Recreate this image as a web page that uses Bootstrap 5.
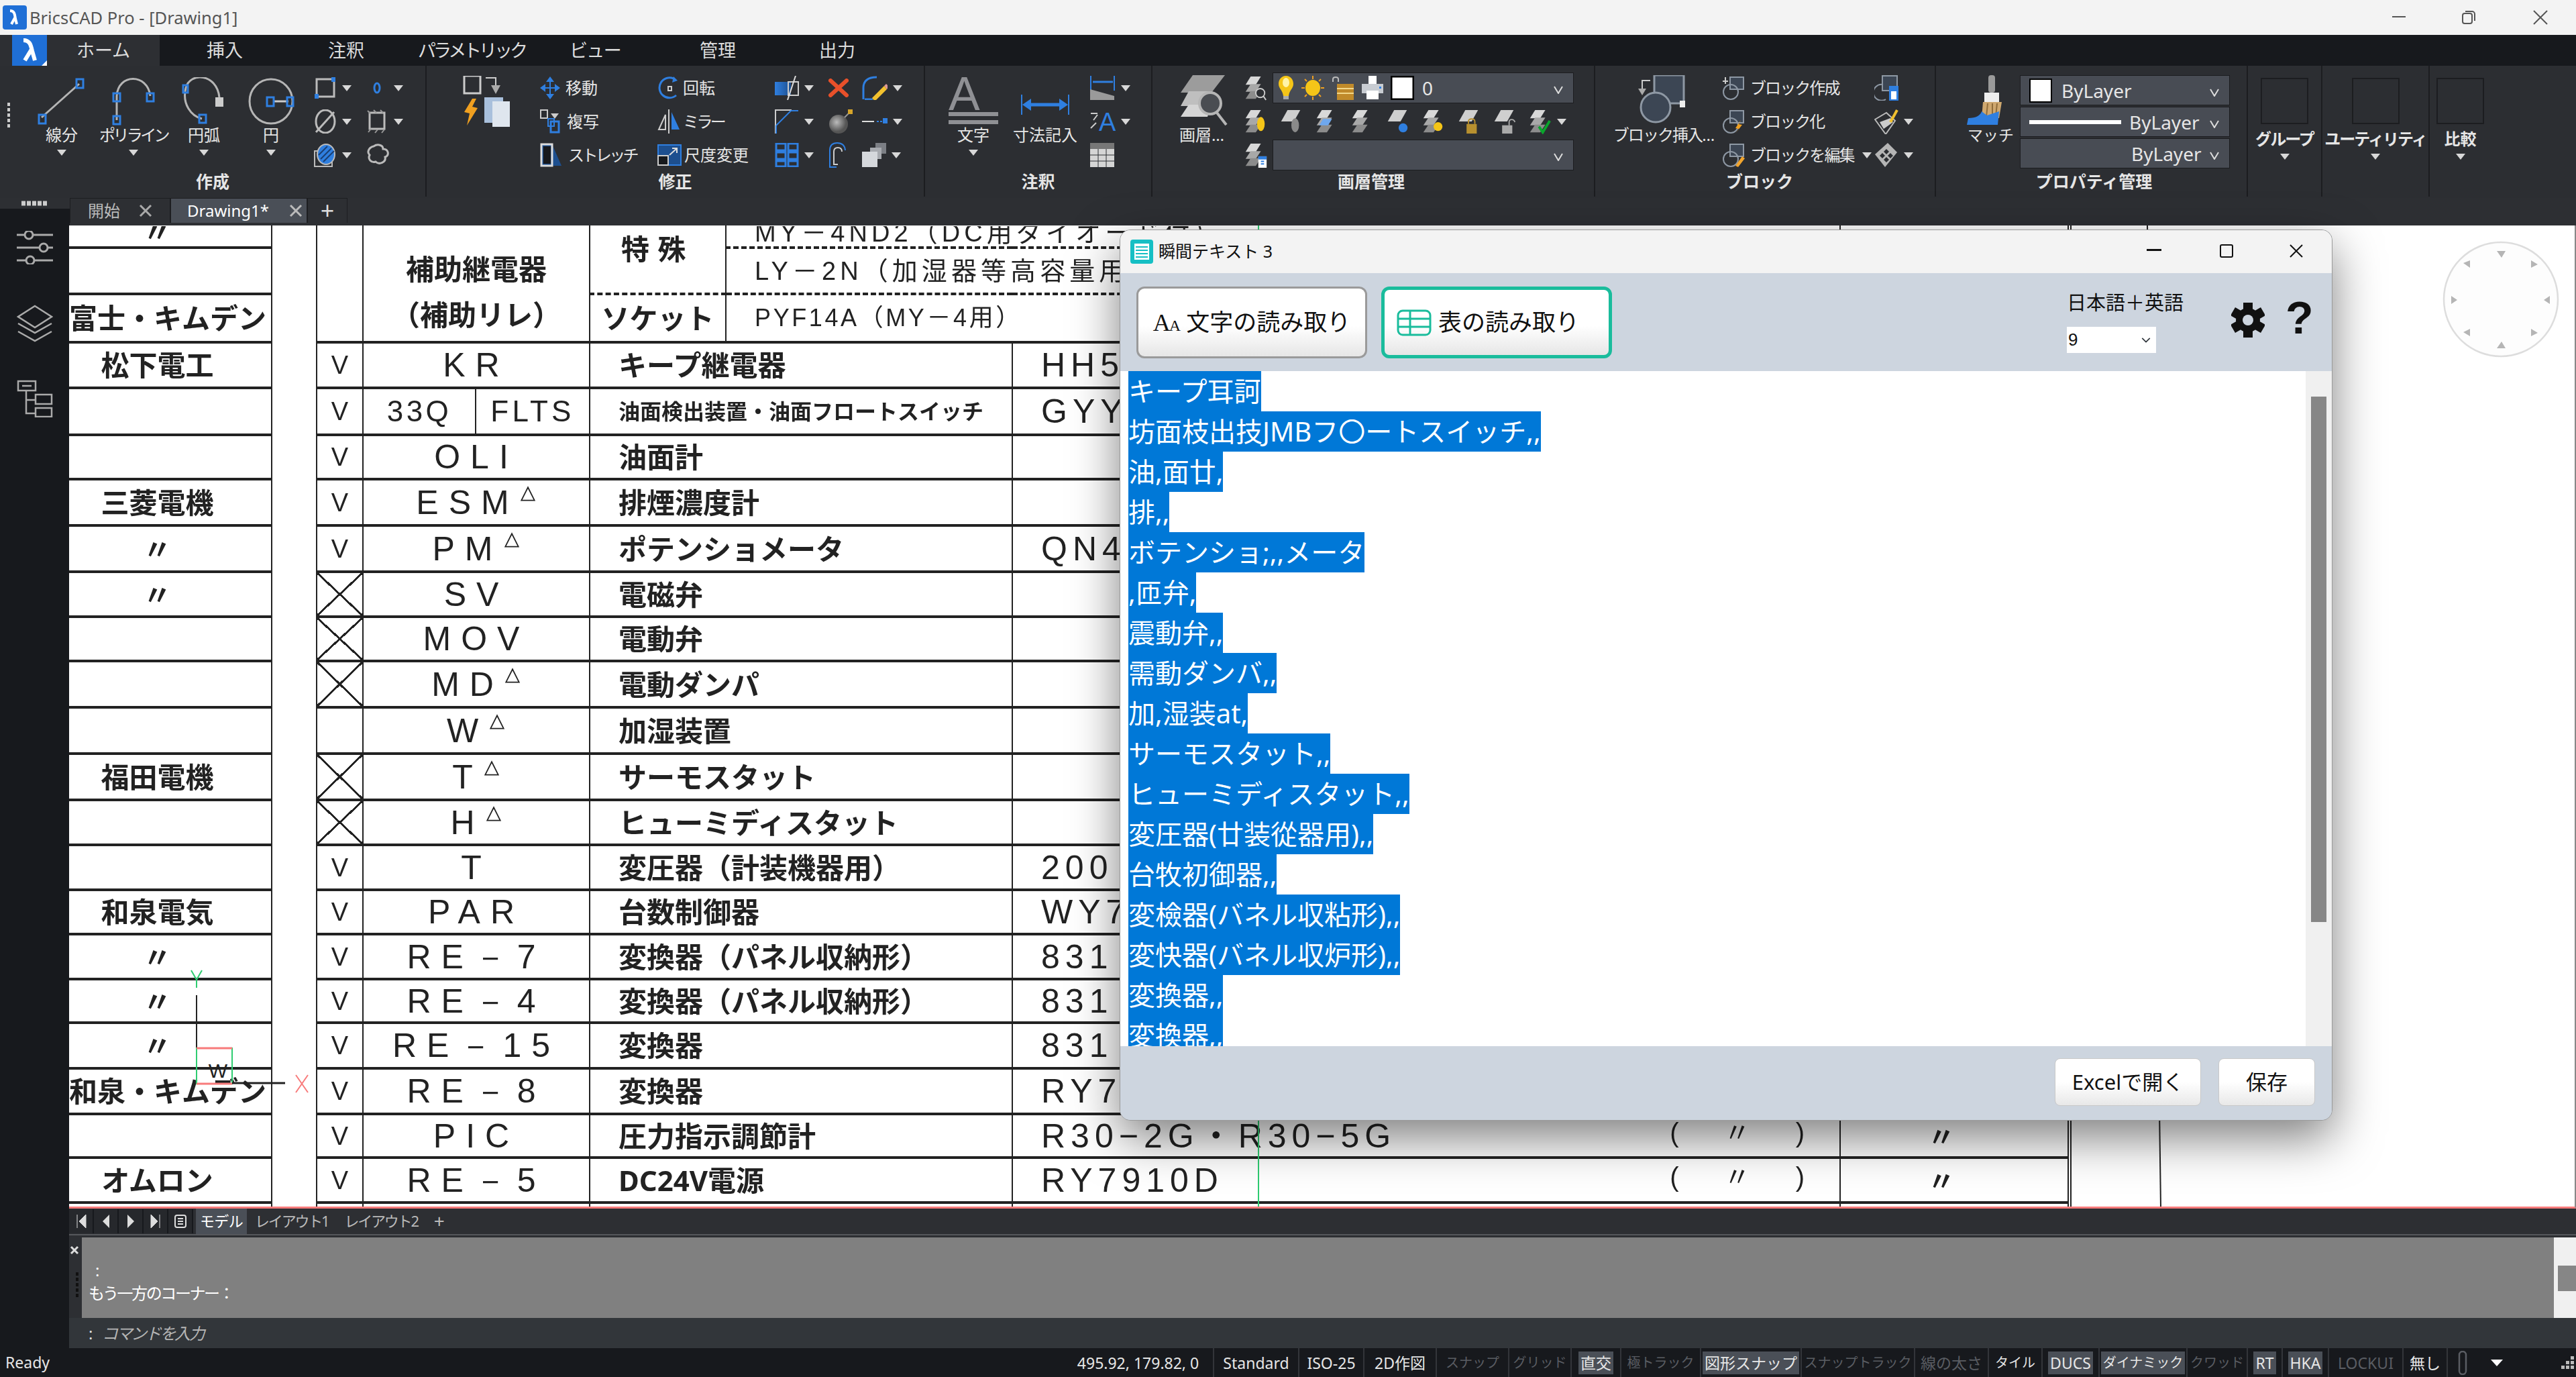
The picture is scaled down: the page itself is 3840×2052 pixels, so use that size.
<!DOCTYPE html>
<html lang="ja">

<head>
  <meta charset="UTF-8">
  <meta name="viewport" content="width=device-width, initial-scale=1.0">
  <title>BricsCAD Pro - [Drawing1]</title>
  <link href="https://cdn.jsdelivr.net/npm/bootstrap@5.3.0/dist/css/bootstrap.min.css" rel="stylesheet">
  <style>
    body {
      width: 3840px;
      height: 2052px;
      overflow: hidden;
      background: #17191d;
      color: #e6e6e6;
      font-family: "Noto Sans", "Noto Sans CJK JP", sans-serif;
      font-size: 24px;
    }

    svg { display: block; flex: none; }
    .kn { letter-spacing: -.15em; }
    .kn2 { letter-spacing: -.08em; }

    /* title + menu */
    .titlebar { height: 52px; background: #f3f3f3; color: #555; font-size: 25.5px; }
    .titlebar .ctl { position: absolute; top: 15px; }
    .menubar { height: 46px; background: #17191d; font-size: 27px; color: #ddd; }
    .menubar .tab { display: flex; align-items: center; justify-content: center; height: 46px; }
    .menubar .tab:nth-child(1) { width: 238px; background: #2d2f33; padding-left: 70px; position: relative; }
    .menubar .tab:nth-child(2) { width: 194px; }
    .menubar .tab:nth-child(3) { width: 168px; }
    .menubar .tab:nth-child(4) { width: 206px; }
    .menubar .tab:nth-child(5) { width: 162px; }
    .menubar .tab:nth-child(6) { width: 204px; }
    .menubar .tab:nth-child(7) { width: 152px; }
    .menubar .logo { position: absolute; left: 18px; top: 0; }

    /* ribbon */
    .ribbon { height: 197px; background: #2c2e32; }
    .panel { height: 195px; border-right: 2px solid #1c1d20; flex: none; }
    .panel-body { height: 155px; display: flex; }
    .panel-title { height: 34px; line-height: 34px; text-align: center; font-weight: 700; font-size: 25px; }
    .p1 { width: 636px; padding-left: 38px; }
    .p2 { width: 743px; padding-left: 54px; }
    .p3 { width: 339px; padding-left: 22px; }
    .p4 { width: 660px; padding-left: 40px; }
    .p5 { width: 508px; padding-left: 14px; }
    .p6 { width: 465px; padding-left: 38px; }
    .p7 { width: 111px; }
    .p8 { width: 160px; }
    .p9 { flex: 1; border-right: 0; width: 218px; padding-left: 10px; }
    .lg { display: flex; flex-direction: column; align-items: center; flex: none; white-space: nowrap; }
    .lg .ic { height: 75px; margin-top: 14px; display: flex; align-items: flex-end; }
    .lg .lb { line-height: 28px; height: 28px; }
    .lg .cr { margin-top: 8px; }
    .cr { display: block; flex: none; width: 0; height: 0; border-left: 7px solid transparent; border-right: 7px solid transparent; border-top: 9px solid #d8d8d8; }
    .stack { display: grid; grid-auto-rows: 50px; margin-top: 8px; align-items: center; flex: none; }
    .it { display: flex; align-items: center; white-space: nowrap; }
    .combo { background: #484c54; border: 1px solid #1c1d20; display: flex; align-items: center; position: relative; font-size: 28px; }
    .combo .chev { position: absolute; right: 14px; top: 50%; margin-top: -3px; }
    .gp { width: 71px; height: 69px; border: 2px solid #1c1d20; margin-top: 18px; }

    /* doc tabs */
    .docbar { height: 41px; background: #2d2f33; position: relative; }
    .docbar .lead { width: 104px; height: 41px; background: linear-gradient(#2d2f33 0 16px, #17191d 16px); padding: 4px 0 0 32px; }
    .doc { height: 37px; display: flex; align-items: center; color: #bbb; border: 1px solid #1d1e21; border-bottom: 0; }
    .doc.on { background: #4a4f57; color: #fff; }

    /* rail, canvas */
    .work { height: 1673px; }
    .rail { width: 103px; flex: none; background: #17191d; position: relative; }
    .canvas { height: 1466px; background: #fff; position: relative; overflow: hidden; border-bottom: 3px solid #f87b7b; border-right: 2px solid #888; }
    .scan { table-layout: fixed; width: 2982px; border-collapse: collapse; color: #222; filter: blur(.7px); }
    .scan td { border-left: 2px solid #222; border-bottom: 4px solid #222; padding: 0; white-space: nowrap; overflow: hidden; vertical-align: middle; line-height: 1; }
    .scan td.mk { border-left: 0; text-align: center; font-size: 42px; font-weight: 700; padding-right: 38px; }
    .scan td.gap { border-bottom: 0; }
    .scan td.v { text-align: center; font-size: 38px; font-family: "Liberation Sans", sans-serif; }
    .scan td.x { background:
        linear-gradient(to top right, transparent calc(50% - 1.5px), #222 calc(50% - 1.5px), #222 calc(50% + 1.5px), transparent calc(50% + 1.5px)),
        linear-gradient(to bottom right, transparent calc(50% - 1.5px), #222 calc(50% - 1.5px), #222 calc(50% + 1.5px), transparent calc(50% + 1.5px)); }
    .scan td.sy { text-align: center; font-family: "Liberation Sans", sans-serif; font-size: 50px; letter-spacing: .3em; }
    .scan td.sy sup { font-size: 26px; letter-spacing: 0; top: -.8em; font-weight: 700; }
    .scan td.nm { font-size: 42px; font-weight: 700; padding-left: 42px; }
    .scan td.nm.sm { font-size: 32px; }
    .scan td.md { font-family: "Liberation Sans", "Noto Sans CJK JP", sans-serif; font-size: 50px; letter-spacing: .16em; padding-left: 42px; }
    .scan td.rm { font-size: 40px; padding-left: 130px; font-weight: 700; border-right: 6px double #222; }
    .scan td.dash { border-bottom: 4px dashed #222; }
    .scan .hd { text-align: center; font-weight: 700; font-size: 42px; line-height: 68px; }
    .scan .r { float: right; margin-right: 24px; letter-spacing: .7em; font-size: 40px; }
    .scan .clip { height: 29px; overflow: hidden; display: flex; align-items: flex-end; justify-content: inherit; }
    .scan tr.tail td { border-bottom: 0; font-size: 0; }

    /* layout tabs, command line */
    .laybar { height: 38px; background: #2d2f33; color: #bbb; font-size: 22px; }
    .laybar .nv { width: 37px; height: 36px; display: flex; align-items: center; justify-content: center; background: #26282c; border-right: 2px solid #17191d; }
    .laybar .lt { height: 38px; line-height: 36px; padding: 0 6px; white-space: nowrap; letter-spacing: -.03em; }
    .laybar .lt.on { background: #4a4f57; color: #fff; }
    .cmdsep { height: 5px; background: #2d2f33; border-top: 2px solid #55575b; }
    .cmdout { height: 120px; background: #808080; color: #fff; font-size: 24px; line-height: 34px; padding: 32px 0 0 10px; letter-spacing: -.1em; }
    .cmdgrip { width: 19px; background: #2d2f33; flex: none; }
    .cmdbar { width: 33px; background: #f0f0f0; flex: none; padding-top: 42px; }
    .cmdbar div { height: 38px; margin-left: 6px; background: #868686; }
    .cmdin { height: 45px; background: #32363a; color: #b5b5b5; font-size: 24px; font-style: italic; padding-left: 29px; letter-spacing: -.1em; }

    /* status */
    .status { height: 43px; background: #17191d; font-size: 23px; color: #e6e6e6; }
    .status .sb { height: 43px; display: flex; align-items: center; justify-content: center; border-right: 2px solid #33353a; flex: none; white-space: nowrap; padding: 4px 4px; }
    .status .sb span { display: block; line-height: 34px; padding: 0 3px; }
    .status .on span { background: #4a4f57; }
    .status .dim { color: #5a5d63; }
    .status .k { font-size: 20px; }

    /* dialog */
    .dlg { left: 1669px; top: 342px; width: 1808px; height: 1328px; border-radius: 16px; overflow: hidden; border: 1px solid #9a9a9a; box-shadow: 0 26px 70px rgba(0, 0, 0, .5); z-index: 10; color: #111; background: #cdd5df; }
    .dlg-title { height: 64px; background: #f3f3f3; font-size: 25px; color: #111; }
    .dlg-tools { height: 146px; background: #cdd5df; padding: 20px 0 0 24px; }
    .read-btn { width: 344px; height: 107px; padding: 0; border: 3px solid #9a9a9a; border-radius: 12px; background: linear-gradient(#fff 55%, #e6e6e6); color: #111; font-size: 35px; display: flex; align-items: center; justify-content: center; gap: 10px; }
    .read-btn.on { border: 5px solid #1abc9c; margin-left: 21px; justify-content: flex-start; padding-left: 18px; }
    .read-btn .aa { font-family: "Liberation Serif", serif; font-size: 36px; letter-spacing: -2px; }
    .read-btn .aa small { font-size: 24px; }
    .lang { position: absolute; left: 1411px; top: 27px; font-size: 29px; white-space: nowrap; line-height: 34px; }
    .lang .form-select { width: 133px; height: 39px; margin-top: 19px; padding: 0 0 0 2px; border: 0; border-radius: 0; font-size: 26px; line-height: 39px; background-position: right 8px center; background-size: 14px; color: #111; font-family: "Liberation Sans", sans-serif; }
    .dlg-text { height: 1006px; background: #fff; overflow: hidden; }
    .dlg-lines { flex: 1; padding-left: 12px; overflow: hidden; font-size: 40px; line-height: 60px; }
    .dlg-lines span { display: table; height: 60px; background: #0078d7; color: #fff; white-space: nowrap; }
    .dlg-scroll { width: 39px; background: #f0f0f0; padding: 38px 0 0 8px; }
    .dlg-scroll div { width: 23px; height: 783px; background: #868686; }
    .dlg-foot { height: 112px; background: #cdd5df; padding: 18px 25px 0 0; gap: 26px; }
    .foot-btn { height: 71px; padding: 0; border: 1px solid #c8c8c8; border-radius: 8px; background: linear-gradient(#fff 50%, #e8e8e8); color: #111; font-size: 31px; }
  </style>
</head>

<body class="position-relative">

  <svg width="0" height="0" class="position-absolute">
    <symbol id="lyr" viewBox="0 0 35 40">
      <path d="M10 2h16l-8 13H2z" fill="#d8d8d8"/>
      <path d="M10 14h16l-8 12H2z" fill="#a8a8a8"/>
      <path d="M10 25h16l-8 12H2z" fill="#8c8c8c"/>
    </symbol>
    <symbol id="one" viewBox="0 0 35 40">
      <path d="M12 2h20l-10 18H2z" fill="#cfcfcf"/>
    </symbol>
    <symbol id="chev" viewBox="0 0 16 12">
      <path d="M2 1l6 10 6-10" fill="none" stroke="#ddd" stroke-width="2"/>
    </symbol>
  </svg>

  <!-- window title -->
  <div class="titlebar d-flex align-items-center position-relative">
    <svg class="ms-1" width="36" height="36" viewBox="0 0 36 36"><rect width="36" height="36" rx="4" fill="#1f6fd6"/><path d="M11 8c7 0 7 6 8 12l2 8M19 17l-6 11" fill="none" stroke="#fff" stroke-width="4"/></svg>
    <span class="ms-1">BricsCAD Pro - [Drawing1]</span>
    <svg class="ctl" style="left:3565px" width="22" height="22" viewBox="0 0 22 22"><path d="M1 10h20" stroke="#555" stroke-width="2"/></svg>
    <svg class="ctl" style="left:3669px" width="22" height="22" viewBox="0 0 22 22"><rect x="2" y="5" width="14" height="15" rx="3" fill="none" stroke="#555" stroke-width="2"/><path d="M6 2h10a4 4 0 0 1 4 4v10" fill="none" stroke="#555" stroke-width="2"/></svg>
    <svg class="ctl" style="left:3776px" width="22" height="22" viewBox="0 0 22 22"><path d="M1 1l20 20M21 1L1 21" stroke="#555" stroke-width="2"/></svg>
  </div>

  <!-- ribbon tabs -->
  <div class="menubar d-flex">
    <div class="tab">
      <svg class="logo" width="52" height="46" viewBox="0 0 52 46"><rect width="52" height="46" fill="#1f6fd6"/><path d="M17 8c10 0 11 8 13 16l4 14M30 20L19 38" fill="none" stroke="#fff" stroke-width="6"/><path d="M44 46l8-8v8z" fill="#fff"/></svg>
      ホーム
    </div>
    <div class="tab">挿入</div>
    <div class="tab">注釈</div>
    <div class="tab kn">パラメトリック</div>
    <div class="tab" style="letter-spacing:-.06em">ビュー</div>
    <div class="tab">管理</div>
    <div class="tab">出力</div>
  </div>

  <!-- ribbon -->
  <div class="ribbon d-flex">
    <div class="panel p1 position-relative">
      <svg class="position-absolute" style="left:10px;top:55px" width="6" height="40" viewBox="0 0 6 40"><path d="M3 0v40" stroke="#ccc" stroke-width="4" stroke-dasharray="5 3"/></svg>
      <div class="panel-body">
        <div class="lg" style="width:108px">
          <div class="ic"><svg width="72" height="72" viewBox="0 0 72 72"><path d="M6 60L62 10" stroke="#b5b5b5" stroke-width="3"/><g fill="none" stroke="#2f7fe0" stroke-width="3"><rect x="2" y="56" width="10" height="13"/><rect x="58" y="3" width="10" height="13"/></g></svg></div>
          <div class="lb">線分</div><i class="cr"></i>
        </div>
        <div class="lg" style="width:106px">
          <div class="ic"><svg width="66" height="72" viewBox="0 0 66 72"><path d="M8 28C10-6 54-6 58 28M8 28v36" fill="none" stroke="#b5b5b5" stroke-width="3"/><g fill="none" stroke="#2f7fe0" stroke-width="3"><rect x="3" y="24" width="10" height="12"/><rect x="53" y="24" width="10" height="12"/><rect x="3" y="58" width="10" height="12"/></g></svg></div>
          <div class="lb kn">ポリライン</div><i class="cr"></i>
        </div>
        <div class="lg" style="width:104px">
          <div class="ic"><svg width="66" height="72" viewBox="0 0 66 72"><path d="M6 16C12-8 52-6 56 30M6 16c-6 24 8 42 24 46" fill="none" stroke="#b5b5b5" stroke-width="3"/><rect x="2" y="12" width="7" height="11" fill="none" stroke="#2f7fe0" stroke-width="3"/><rect x="50" y="30" width="12" height="14" fill="#ccc"/><rect x="26" y="56" width="10" height="12" fill="none" stroke="#2f7fe0" stroke-width="3"/></svg></div>
          <div class="lb">円弧</div><i class="cr"></i>
        </div>
        <div class="lg" style="width:96px">
          <div class="ic"><svg width="72" height="72" viewBox="0 0 72 72"><ellipse cx="36" cy="36" rx="32" ry="33" fill="none" stroke="#b5b5b5" stroke-width="3"/><path d="M40 36h22" stroke="#ccc" stroke-width="3"/><g fill="none" stroke="#2f7fe0" stroke-width="3"><rect x="30" y="30" width="10" height="13"/><rect x="60" y="30" width="9" height="13"/></g></svg></div>
          <div class="lb">円</div><i class="cr"></i>
        </div>
        <div class="stack ms-3" style="grid-template-columns:77px 77px">
          <div class="it gap-2"><svg width="34" height="32" viewBox="0 0 34 32"><rect x="4" y="3" width="26" height="26" fill="none" stroke="#bbb" stroke-width="3"/><rect x="26" y="0" width="6" height="7" fill="#2f7fe0"/><rect x="1" y="25" width="6" height="7" fill="#2f7fe0"/></svg><i class="cr"></i></div>
          <div class="it gap-2"><svg width="34" height="32" viewBox="0 0 34 32"><ellipse cx="17" cy="16" rx="4" ry="7" fill="none" stroke="#2f7fe0" stroke-width="3"/></svg><i class="cr"></i></div>
          <div class="it gap-2"><svg width="34" height="36" viewBox="0 0 34 36"><ellipse cx="17" cy="18" rx="14" ry="17" fill="none" stroke="#bbb" stroke-width="3"/><path d="M3 34L30 4" stroke="#bbb" stroke-width="3"/></svg><i class="cr"></i></div>
          <div class="it gap-2"><svg width="34" height="36" viewBox="0 0 34 36"><rect x="6" y="5" width="22" height="24" fill="none" stroke="#bbb" stroke-width="3"/><path d="M3 2l4 4M12 1l4 4M22 1l4 4M4 34l4-5M14 35l4-5M24 35l4-5" stroke="#999" stroke-width="2"/></svg><i class="cr"></i></div>
          <div class="it gap-2"><svg width="34" height="36" viewBox="0 0 34 36"><rect x="1" y="12" width="26" height="23" fill="none" stroke="#bbb" stroke-width="2"/><ellipse cx="18" cy="17" rx="13" ry="15" fill="#2f7fe0" stroke="#bbb" stroke-width="2"/><path d="M10 24L26 8M14 28L30 12M7 18L20 5" stroke="#1a3f73" stroke-width="2"/></svg><i class="cr"></i></div>
          <div class="it gap-2"><svg width="36" height="34" viewBox="0 0 36 34"><path d="M12 4c6-4 14-2 14 4 8 0 10 9 3 12 2 8-9 12-14 7-7 2-12-4-9-10C1 12 6 5 12 4z" fill="none" stroke="#bbb" stroke-width="3"/></svg></div>
        </div>
      </div>
      <div class="panel-title" style="margin-left:-38px">作成</div>
    </div>

    <div class="panel p2">
      <div class="panel-body">
        <div style="width:115px;padding-top:15px;flex:none">
          <svg width="72" height="76" viewBox="0 0 72 76"><rect x="2" y="0" width="24" height="26" fill="none" stroke="#ccc" stroke-width="3"/><path d="M34 3h15v12" fill="none" stroke="#ccc" stroke-width="2"/><path d="M42 14h14l-7 13z" fill="#aaa"/><path d="M14 34L2 54l8 2-4 18 16-26-8-2 6-12z" fill="#f0a020"/><rect x="32" y="32" width="28" height="38" fill="#a9c0dc"/><rect x="44" y="38" width="26" height="38" fill="#dfe6ee"/></svg>
        </div>
        <div class="stack" style="width:175px">
          <div class="it gap-2"><svg width="30" height="34" viewBox="0 0 30 34"><path d="M15 0l6 8H9zM15 34l-6-8h12zM0 17l8-6v12zM30 17l-8 6V11z" fill="#2f7fe0"/><path d="M15 4v26M4 17h22" stroke="#2f7fe0" stroke-width="2"/></svg>移動</div>
          <div class="it gap-2"><svg width="32" height="36" viewBox="0 0 32 36"><rect x="1" y="1" width="10" height="12" fill="none" stroke="#ccc" stroke-width="2"/><path d="M16 6h12l-6 8z" fill="#ccc"/><rect x="16" y="18" width="12" height="16" fill="none" stroke="#2f7fe0" stroke-width="3"/><rect x="12" y="14" width="9" height="11" fill="none" stroke="#2f7fe0" stroke-width="2"/></svg>複写</div>
          <div class="it gap-2"><svg width="34" height="36" viewBox="0 0 34 36"><path d="M2 2h16l14 32H2z" fill="#1d4f8f"/><path d="M2 2h16v32H2z" fill="none" stroke="#ddd" stroke-width="3"/><rect x="5" y="5" width="11" height="26" fill="#17191d"/></svg><span class="kn">ストレッチ</span></div>
        </div>
        <div class="stack" style="width:175px">
          <div class="it gap-1"><svg width="34" height="34" viewBox="0 0 34 34"><path d="M24 3A15 15 0 1 0 28 28" fill="none" stroke="#2f7fe0" stroke-width="3"/><rect x="16" y="15" width="5" height="6" fill="none" stroke="#ccc" stroke-width="2"/><path d="M24 0l6 6-8 3z" fill="#2f7fe0"/></svg>回転</div>
          <div class="it gap-1"><svg width="34" height="36" viewBox="0 0 34 36"><path d="M17 0v36" stroke="#ccc" stroke-width="2"/><path d="M12 8v22H2z" fill="none" stroke="#ccc" stroke-width="2"/><path d="M21 4v26h12z" fill="#2f7fe0"/></svg><span class="kn">ミラー</span></div>
          <div class="it gap-1"><svg width="36" height="32" viewBox="0 0 36 32"><rect x="1" y="1" width="34" height="30" fill="#1d4f8f" stroke="#2f7fe0" stroke-width="2"/><rect x="1" y="17" width="15" height="14" fill="#17191d" stroke="#ccc" stroke-width="2"/><path d="M18 16L28 7M22 6h7v7" fill="none" stroke="#ddd" stroke-width="2"/></svg>尺度変更</div>
        </div>
        <div class="stack" style="grid-template-columns:80px 50px 75px">
          <div class="it gap-2"><svg width="36" height="36" viewBox="0 0 36 36"><defs><linearGradient id="tr"><stop offset="0" stop-color="#2f7fe0"/><stop offset="1" stop-color="#1d4f8f"/></linearGradient></defs><rect y="9" width="24" height="20" fill="url(#tr)"/><rect x="20" y="9" width="15" height="20" fill="none" stroke="#ccc" stroke-width="2"/><path d="M31 0L19 36" stroke="#ddd" stroke-width="2"/></svg><i class="cr"></i></div>
          <div class="it"><svg width="30" height="28" viewBox="0 0 30 28"><path d="M3 3l24 22M27 3L3 25" stroke="#e8502a" stroke-width="6" stroke-linecap="round"/></svg></div>
          <div class="it gap-2"><svg width="38" height="36" viewBox="0 0 38 36"><path d="M2 35V18Q2 2 22 2" fill="none" stroke="#2f7fe0" stroke-width="3"/><path d="M4 35h12" stroke="#2f7fe0" stroke-width="3"/><path d="M15 33l18-18 4 5-18 18z" fill="#f2c12e"/><path d="M33 15l3-3 4 4-3 4z" fill="#d99"/></svg><i class="cr"></i></div>
          <div class="it gap-2"><svg width="36" height="36" viewBox="0 0 36 36"><path d="M1 36V1h24" fill="none" stroke="#ccc" stroke-width="2"/><path d="M2 24L24 2h11M2 24v12" fill="none" stroke="#2f7fe0" stroke-width="2"/></svg><i class="cr"></i></div>
          <div class="it"><svg width="38" height="38" viewBox="0 0 38 38"><defs><radialGradient id="bm" cx=".4" cy=".4"><stop offset="0" stop-color="#bbb"/><stop offset="1" stop-color="#555"/></radialGradient></defs><circle cx="15" cy="23" r="14" fill="url(#bm)"/><path d="M24 13l9-9" stroke="#999" stroke-width="2"/><rect x="29" y="1" width="7" height="7" fill="#d6a52a"/></svg></div>
          <div class="it gap-2"><svg width="38" height="14" viewBox="0 0 38 14"><path d="M0 7h18" stroke="#ddd" stroke-width="2"/><path d="M22 7h8" stroke="#2f7fe0" stroke-width="2" stroke-dasharray="3 2"/><rect x="31" y="2" width="7" height="8" fill="#2f7fe0"/></svg><i class="cr"></i></div>
          <div class="it gap-2"><svg width="36" height="36" viewBox="0 0 36 36"><path d="M2 1h14v10H2zM20 1h14v10H20zM2 14h14v10H2zM20 14h14v10H20zM2 27h14v8H2zM20 27h14v8H20z" fill="none" stroke="#2f7fe0" stroke-width="3"/></svg><i class="cr"></i></div>
          <div class="it"><svg width="26" height="38" viewBox="0 0 26 38"><path d="M12 37H2V12Q2 1 13 1t12 11" fill="none" stroke="#2f7fe0" stroke-width="2"/><path d="M14 33H8V14q0-6 6-6t6 6" fill="none" stroke="#ccc" stroke-width="2"/></svg></div>
          <div class="it gap-2"><svg width="36" height="36" viewBox="0 0 36 36"><rect x="20" y="0" width="16" height="16" fill="#7c7f85"/><rect x="12" y="7" width="17" height="17" fill="#a8abb0"/><rect y="13" width="23" height="23" fill="#d5d8dc"/></svg><i class="cr"></i></div>
        </div>
      </div>
      <div class="panel-title" style="margin-left:-54px">修正</div>
    </div>

    <div class="panel p3">
      <div class="panel-body">
        <div class="lg" style="width:100px">
          <div class="ic"><svg width="74" height="75" viewBox="0 0 74 75"><text x="0" y="52" font-size="70" fill="#8f9094" font-family="Liberation Sans">A</text><path d="M0 58h74M0 70h74" stroke="#8f9094" stroke-width="6"/></svg></div>
          <div class="lb">文字</div><i class="cr"></i>
        </div>
        <div class="lg" style="width:118px;margin-left:-2px">
          <div class="ic"><svg width="72" height="30" viewBox="0 0 72 30" class="mb-3"><path d="M1 0v30M71 0v30" stroke="#2f7fe0" stroke-width="2"/><path d="M14 15h44" stroke="#2f7fe0" stroke-width="5"/><path d="M2 15l13-9v18zM70 15l-13-9v18z" fill="#2f7fe0"/></svg></div>
          <div class="lb">寸法記入</div>
        </div>
        <div class="stack ms-2" style="grid-template-columns:50px">
          <div class="it gap-2" style="width:60px"><svg width="38" height="36" viewBox="0 0 38 36"><path d="M1 0v22M36 0v22" stroke="#2f7fe0" stroke-width="2"/><path d="M4 9h30" stroke="#2f7fe0" stroke-width="3"/><path d="M0 20l36 10v6H0z" fill="#9a9a9a"/></svg><i class="cr"></i></div>
          <div class="it gap-2" style="width:60px"><svg width="38" height="32" viewBox="0 0 38 32"><text x="13" y="30" font-size="38" fill="#2f7fe0" font-family="Liberation Sans">A</text><path d="M1 4h10M5 14l6-8M1 26l8-8" stroke="#ccc" stroke-width="2"/></svg><i class="cr"></i></div>
          <div class="it"><svg width="36" height="36" viewBox="0 0 36 36"><rect width="36" height="36" fill="#d5d5d5"/><rect width="36" height="9" fill="#777"/><path d="M0 18h36M0 27h36M12 9v27M24 9v27" stroke="#2c2e32" stroke-width="1"/></svg></div>
        </div>
      </div>
      <div class="panel-title" style="margin-left:-22px">注釈</div>
    </div>

    <div class="panel p4">
      <div class="panel-body">
        <div class="lg" style="width:96px;align-items:flex-start">
          <div class="ic"><svg width="72" height="75" viewBox="0 0 72 75"><path d="M20 0h48L48 26H2z" fill="#9c9c9c"/><path d="M14 24h34l-6 22H2z" fill="#bfbfbf"/><path d="M14 44h34l-6 18H2z" fill="#d5d5d5"/><circle cx="46" cy="42" r="16" fill="#4a4d52" stroke="#b5b5b5" stroke-width="4"/><path d="M56 56l14 18" stroke="#b5b5b5" stroke-width="4"/></svg></div>
          <div class="lb">画層…</div>
        </div>
        <div style="width:495px;flex:none;padding-top:10px">
          <div class="d-flex align-items-center" style="height:46px">
            <svg width="35" height="38" viewBox="0 0 35 40"><use href="#lyr"/><circle cx="25" cy="28" r="7" fill="#2c2e32" stroke="#ccc" stroke-width="2"/><path d="M30 33l4 6" stroke="#ccc" stroke-width="2"/></svg>
            <div class="combo ms-2" style="width:449px;height:46px;gap:11px;padding-left:7px">
              <svg width="24" height="36" viewBox="0 0 24 36"><path d="M12 0c7 0 11 6 11 12 0 7-6 9-7 18h-8C7 21 1 19 1 12 1 6 5 0 12 0z" fill="#f5c518"/><ellipse cx="12" cy="10" rx="5" ry="7" fill="#fff4a8"/><rect x="8" y="30" width="8" height="5" fill="#aaa"/></svg>
              <svg width="34" height="36" viewBox="0 0 34 36"><ellipse cx="17" cy="18" rx="11" ry="12" fill="#f5c518"/><path d="M17 0v5M17 31v5M0 18h5M29 18h5M5 5l3 3M26 28l3 3M29 5l-3 3M8 28l-3 3" stroke="#f0a020" stroke-width="2"/></svg>
              <svg width="34" height="36" viewBox="0 0 34 36"><rect x="8" y="12" width="25" height="24" fill="#c08a2a"/><path d="M8 19h25M8 26h25" stroke="#f3d88a" stroke-width="2"/><path d="M2 9V5q0-3 4-3t4 3v4" fill="none" stroke="#bbb" stroke-width="2"/></svg>
              <svg width="32" height="36" viewBox="0 0 32 36"><rect x="10" y="0" width="12" height="12" fill="#fff"/><rect y="12" width="32" height="14" fill="#c8ccd2"/><rect x="7" y="22" width="18" height="13" fill="#fff"/><rect x="26" y="16" width="3" height="3" fill="#2f7fe0"/></svg>
              <svg width="35" height="36" viewBox="0 0 35 36"><rect x="1" y="1" width="33" height="34" fill="#fff" stroke="#000" stroke-width="3"/></svg>
              <span style="margin-left:1px">0</span>
              <svg class="chev" width="16" height="12"><use href="#chev"/></svg>
            </div>
          </div>
          <div class="d-flex align-items-center" style="height:54px;gap:18px">
            <svg width="35" height="38" viewBox="0 0 35 40"><use href="#lyr"/><ellipse cx="26" cy="24" rx="6" ry="11" fill="#f5c518"/></svg>
            <svg width="35" height="38" viewBox="0 0 35 40"><use href="#one"/><ellipse cx="24" cy="26" rx="6" ry="11" fill="#8a8a8a"/></svg>
            <svg width="35" height="38" viewBox="0 0 35 40"><use href="#lyr"/><path d="M12 16h14l-6 10H6z" fill="#6fa8ee"/></svg>
            <svg width="35" height="38" viewBox="0 0 35 40"><use href="#lyr"/></svg>
            <svg width="35" height="38" viewBox="0 0 35 40"><use href="#one"/><circle cx="26" cy="30" r="7" fill="#2f7fe0"/></svg>
            <svg width="35" height="38" viewBox="0 0 35 40"><use href="#lyr"/><circle cx="25" cy="28" r="7" fill="#f5c518"/></svg>
            <svg width="35" height="38" viewBox="0 0 35 40"><use href="#one"/><rect x="14" y="24" width="16" height="15" fill="#b8902f"/><path d="M17 24v-4q0-4 5-4t5 4v4" fill="none" stroke="#b8902f" stroke-width="2"/></svg>
            <svg width="35" height="38" viewBox="0 0 35 40"><use href="#one"/><rect x="14" y="26" width="16" height="13" fill="#aaa"/><path d="M25 26v-5q0-4 4-4t5 4" fill="none" stroke="#aaa" stroke-width="2"/></svg>
            <svg width="35" height="38" viewBox="0 0 35 40"><use href="#lyr"/><path d="M16 28l6 9 11-18" fill="none" stroke="#0aa52c" stroke-width="4"/></svg>
            <i class="cr" style="margin-left:-10px"></i>
          </div>
          <div class="d-flex align-items-center" style="height:46px">
            <svg width="35" height="38" viewBox="0 0 35 40"><use href="#lyr"/><rect x="22" y="22" width="13" height="18" fill="#fff"/><rect x="22" y="22" width="13" height="5" fill="#2f7fe0"/><path d="M26 30h5M26 34h5" stroke="#2f7fe0" stroke-width="2"/></svg>
            <div class="combo ms-2" style="width:449px;height:46px">
              <svg class="chev" width="16" height="12"><use href="#chev"/></svg>
            </div>
          </div>
        </div>
      </div>
      <div class="panel-title" style="margin-left:-40px;padding-right:6px">画層管理</div>
    </div>

    <div class="panel p5">
      <div class="panel-body">
        <div class="lg" style="width:175px">
          <div class="ic"><svg width="76" height="75" viewBox="0 0 76 75"><rect x="24" y="0" width="44" height="42" fill="#3c4654" stroke="#8e98a4" stroke-width="3"/><circle cx="26" cy="48" r="22" fill="#3c4654" stroke="#8e98a4" stroke-width="3"/><path d="M18 8H6v12" fill="none" stroke="#ccc" stroke-width="2"/><path d="M0 20h12L6 30z" fill="#aaa"/><rect x="62" y="38" width="8" height="10" fill="#eee"/></svg></div>
          <div class="lb kn2">ブロック挿入…</div>
        </div>
        <div class="stack" style="width:227px">
          <div class="it gap-2"><svg width="34" height="36" viewBox="0 0 34 36"><rect x="12" y="2" width="20" height="18" fill="#3c4654" stroke="#8e98a4" stroke-width="2"/><circle cx="13" cy="24" r="11" fill="none" stroke="#8e98a4" stroke-width="2"/><path d="M5 2v10M1 8h8" stroke="#ccc" stroke-width="2"/></svg><span class="kn2">ブロック作成</span></div>
          <div class="it gap-2"><svg width="34" height="36" viewBox="0 0 34 36"><rect x="12" y="2" width="20" height="18" fill="#3c4654" stroke="#8e98a4" stroke-width="2"/><circle cx="13" cy="24" r="11" fill="none" stroke="#8e98a4" stroke-width="2"/><path d="M28 16l-8 12 5 1-5 7 10-13-5-1z" fill="#f0a020"/></svg><span class="kn2">ブロック化</span></div>
          <div class="it gap-2"><svg width="34" height="36" viewBox="0 0 34 36"><rect x="12" y="2" width="20" height="18" fill="#3c4654" stroke="#8e98a4" stroke-width="2"/><circle cx="13" cy="24" r="11" fill="none" stroke="#8e98a4" stroke-width="2"/><path d="M20 34l10-14 4 3-10 13z" fill="#f2a52e"/></svg><span class="kn2">ブロックを編集</span><i class="cr ms-1"></i></div>
        </div>
        <div class="stack">
          <div class="it"><svg width="36" height="38" viewBox="0 0 36 38"><rect x="12" y="1" width="22" height="22" fill="#3c4654" stroke="#8e98a4" stroke-width="2"/><path d="M13 14a12 12 0 1 0 4 22" fill="none" stroke="#8e98a4" stroke-width="2"/><rect x="22" y="16" width="14" height="22" fill="#2f7fe0"/><rect x="25" y="24" width="8" height="12" fill="#fff"/></svg></div>
          <div class="it gap-2"><svg width="36" height="38" viewBox="0 0 36 38"><path d="M1 16L18 6l13 12-14 20z" fill="none" stroke="#bbb" stroke-width="2"/><path d="M8 20l16-6 4 6-14 10z" fill="#ccc"/><path d="M24 20L34 2" stroke="#f2c12e" stroke-width="4"/></svg><i class="cr"></i></div>
          <div class="it gap-2"><svg width="36" height="38" viewBox="0 0 36 38"><path d="M1 18L20 1l14 14-18 22z" fill="#b5b5b5"/><path d="M8 20l4-4 4 4-4 4zM14 14l4-4 4 4-4 4zM14 26l4-4 4 4-4 4zM20 20l4-4 4 4-4 4z" fill="#2c2e32"/></svg><i class="cr"></i></div>
        </div>
      </div>
      <div class="panel-title" style="margin-left:-14px;padding-right:16px">ブロック</div>
    </div>

    <div class="panel p6">
      <div class="panel-body">
        <div class="lg" style="width:87px">
          <div class="ic"><svg width="72" height="75" viewBox="0 0 72 75"><rect x="32" y="0" width="10" height="26" rx="4" fill="#9a9a9a"/><rect x="26" y="26" width="22" height="14" fill="#eee"/><path d="M24 40h28l-4 24H22z" fill="#cfa86f"/><path d="M31 42l-2 20M38 42v20M45 42l-2 20" stroke="#8f6c3a" stroke-width="2"/><path d="M2 64c12 0 18-4 20-10l8 6 18-6-2 20H0z" fill="#2f7fe0"/></svg></div>
          <div class="lb" style="font-size:23px">マッチ</div>
        </div>
        <div class="d-flex flex-column" style="width:313px;gap:2px;padding-top:14px;flex:none">
          <div class="combo" style="height:45px;padding-left:13px;gap:14px"><svg width="34" height="36" viewBox="0 0 34 36"><rect x="1" y="1" width="32" height="34" fill="#fff" stroke="#000" stroke-width="2"/></svg>ByLayer<svg class="chev" width="16" height="12"><use href="#chev"/></svg></div>
          <div class="combo" style="height:45px;padding-left:13px;gap:12px"><svg width="137" height="6" viewBox="0 0 137 6"><rect width="137" height="6" fill="#fff"/></svg>ByLayer<svg class="chev" width="16" height="12"><use href="#chev"/></svg></div>
          <div class="combo" style="height:45px;padding-left:165px">ByLayer<svg class="chev" width="16" height="12"><use href="#chev"/></svg></div>
        </div>
      </div>
      <div class="panel-title" style="margin-left:-38px;padding-left:8px">プロパティ管理</div>
    </div>

    <div class="panel p7"><div class="lg"><div class="gp"></div><div class="lb mt-2 fw-bold kn2">グループ</div><i class="cr"></i></div></div>
    <div class="panel p8"><div class="lg"><div class="gp"></div><div class="lb mt-2 fw-bold kn2">ユーティリティ</div><i class="cr"></i></div></div>
    <div class="panel p9"><div class="lg" style="width:71px"><div class="gp"></div><div class="lb mt-2 fw-bold">比較</div><i class="cr"></i></div></div>
  </div>

  <!-- document tabs -->
  <div class="docbar d-flex">
    <div class="lead"><svg width="40" height="8" viewBox="0 0 40 8"><path d="M0 4h40" stroke="#ccc" stroke-width="7" stroke-dasharray="6 2"/></svg></div>
    <div class="doc" style="width:150px;padding-left:26px;gap:28px">開始<svg width="20" height="20" viewBox="0 0 20 20"><path d="M2 2l16 16M18 2L2 18" stroke="#aaa" stroke-width="3"/></svg></div>
    <div class="doc on" style="width:204px;padding-left:24px;gap:30px">Drawing1*<svg width="20" height="20" viewBox="0 0 20 20"><path d="M2 2l16 16M18 2L2 18" stroke="#bbb" stroke-width="3"/></svg></div>
    <div class="doc" style="width:60px;justify-content:center;font-size:36px;color:#ddd">+</div>
  </div>

  <!-- workspace -->
  <div class="work d-flex">
    <div class="rail">
      <svg width="54" height="50" viewBox="0 0 54 50" class="position-absolute" style="left:25px;top:8px"><g fill="none" stroke="#aaa" stroke-width="3"><path d="M0 6h12M24 6h30M0 25h34M46 25h8M0 44h14M26 44h28"/><circle cx="18" cy="6" r="6"/><circle cx="40" cy="25" r="6"/><circle cx="20" cy="44" r="6"/></g></svg>
      <svg width="54" height="56" viewBox="0 0 54 56" class="position-absolute" style="left:25px;top:118px"><g fill="none" stroke="#aaa" stroke-width="2.5"><path d="M27 2l25 16-25 16L2 18z"/><path d="M2 28l25 14 25-14M2 40l25 14 25-14"/></g></svg>
      <svg width="54" height="56" viewBox="0 0 54 56" class="position-absolute" style="left:25px;top:230px"><g fill="none" stroke="#aaa" stroke-width="2.5"><rect x="2" y="2" width="26" height="14"/><path d="M8 9h14M14 16v34h14M14 30h14"/><rect x="28" y="22" width="24" height="14"/><rect x="28" y="42" width="24" height="13"/></g></svg>
    </div>
    <div class="flex-grow-1 d-flex flex-column" style="min-width:0">
      <div class="canvas">
        <table class="scan"><colgroup><col style="width:302px"><col style="width:67px"><col style="width:69px"><col style="width:168px"><col style="width:170px"><col style="width:203px"><col style="width:427px"><col style="width:1234px"><col style="width:342px"></colgroup><tbody id="scanRows"></tbody></table>
        <!-- overlays on the drawing: ucs icon, crosshair lines, view compass -->
        <svg class="position-absolute top-0 start-0" width="3737" height="1466" viewBox="103 336 3737 1466">
          <path d="M1876 336v1466" stroke="#2ecc71" stroke-width="2"/>
          <path d="M3201 336L3221 1800" stroke="#222" stroke-width="2"/>
          <path d="M285 1446l8 14 8-14M293 1460v12" fill="none" stroke="#2ecc71" stroke-width="2"/>
          <path d="M293 1483v80" stroke="#222" stroke-width="2"/>
          <rect x="293" y="1562" width="53" height="53" fill="none" stroke="#2ecc71" stroke-width="2"/>
          <path d="M293 1562h53M293 1615h53" stroke="#f87b7b" stroke-width="3"/>
          <text x="325" y="1606" font-size="30" text-anchor="middle" fill="#222" font-family="Liberation Sans">W</text>
          <path d="M346 1614h79" stroke="#222" stroke-width="3"/>
          <path d="M441 1602l18 26M459 1602l-18 26" stroke="#f87b7b" stroke-width="2"/>
          <circle cx="3728" cy="446" r="85" fill="#fdfdfd" stroke="#ddd" stroke-width="2.5"/>
          <g fill="#b5b5b5">
            <path d="M3722 374h13l-6 10zM3722 519h13l-6-10zM3654 441v12l9-6zM3801 441v12l-9-6z"/>
            <path d="M3672 392l10-4v11zM3773 388v11l10-5zM3672 495l10 6v-11zM3773 490v11l10-5z"/>
          </g>
        </svg>
      </div>

      <div class="laybar d-flex align-items-center">
        <div class="nv"><svg width="16" height="22" viewBox="0 0 16 22"><path d="M2 1v20M15 1L5 11l10 10z" fill="#ddd" stroke="#ddd"/></svg></div>
        <div class="nv"><svg width="12" height="22" viewBox="0 0 12 22"><path d="M11 1L1 11l10 10z" fill="#ddd"/></svg></div>
        <div class="nv"><svg width="12" height="22" viewBox="0 0 12 22"><path d="M1 1l10 10-10 10z" fill="#ddd"/></svg></div>
        <div class="nv"><svg width="16" height="22" viewBox="0 0 16 22"><path d="M14 1v20M1 1l10 10L1 21z" fill="#ddd" stroke="#ddd"/></svg></div>
        <div class="nv"><svg width="18" height="20" viewBox="0 0 18 20"><rect x="1" y="1" width="16" height="18" rx="3" fill="none" stroke="#ddd" stroke-width="2"/><path d="M5 6h8M5 10h8M5 14h8" stroke="#ddd" stroke-width="2"/></svg></div>
        <div class="lt on" style="margin-left:4px">モデル</div>
        <div class="lt" style="margin-left:6px;letter-spacing:-.1em">レイアウト1</div>
        <div class="lt" style="margin-left:12px;letter-spacing:-.1em">レイアウト2</div>
        <div class="lt" style="margin-left:12px;font-size:28px">+</div>
      </div>
      <div class="cmdsep"></div>
      <div class="d-flex">
        <div class="cmdgrip position-relative">
          <svg width="14" height="14" viewBox="0 0 14 14" class="position-absolute" style="left:1px;top:12px"><path d="M2 2l10 10M12 2L2 12" stroke="#ddd" stroke-width="3"/></svg>
          <svg width="6" height="40" viewBox="0 0 6 40" class="position-absolute" style="left:9px;top:52px"><path d="M3 0v40" stroke="#111" stroke-width="4" stroke-dasharray="5 3"/></svg>
        </div>
        <div class="cmdout flex-grow-1"><span style="margin-left:10px">:</span><br>もう一方のコーナー：</div>
        <div class="cmdbar"><div></div></div>
      </div>
      <div class="cmdin d-flex align-items-center" style="gap:16px"><span style="font-style:normal;color:#ddd">:</span>コマンドを入力</div>
    </div>
  </div>

  <!-- status bar -->
  <div class="status d-flex align-items-center">
    <div style="width:8px"></div>
    <div style="width:1577px">Ready</div>
    <div class="d-flex" id="statusItems"></div>
    <svg style="margin-left:12px" width="20" height="36" viewBox="0 0 20 36"><rect x="5" y="1" width="10" height="34" rx="5" fill="none" stroke="#5a5d63" stroke-width="2.5"/></svg>
    <i class="cr" style="margin-left:32px;border-left-width:9px;border-right-width:9px;border-top-width:10px;border-top-color:#fff"></i>
    <svg style="margin-left:87px" width="20" height="20" viewBox="0 0 20 20" fill="#bbb"><path d="M14 0h5v5h-5zM7 7h5v5H7zM14 7h5v5h-5zM0 14h5v5H0zM7 14h5v5H7zM14 14h5v5h-5z"/></svg>
  </div>

  <!-- instant text dialog -->
  <div class="dlg position-absolute">
    <div class="dlg-title d-flex align-items-center position-relative" style="padding-left:15px">
      <svg width="34" height="36" viewBox="0 0 34 36"><rect width="34" height="36" rx="4" fill="#16bfc4"/><rect x="6" y="6" width="22" height="24" fill="#fff"/><path d="M8 11h18M8 16h18M8 21h18M8 26h18" stroke="#16bfc4" stroke-width="2"/></svg>
      <span class="ms-2">瞬間テキスト 3</span>
      <svg class="position-absolute" style="left:1530px;top:28px" width="22" height="6"><rect width="22" height="3" fill="#111"/></svg>
      <svg class="position-absolute" style="left:1639px;top:21px" width="20" height="20" viewBox="0 0 20 20"><rect x="1" y="1" width="18" height="18" rx="2" fill="none" stroke="#111" stroke-width="2"/></svg>
      <svg class="position-absolute" style="left:1743px;top:21px" width="20" height="20" viewBox="0 0 20 20"><path d="M1 1l18 18M19 1L1 19" stroke="#111" stroke-width="2"/></svg>
    </div>
    <div class="dlg-tools d-flex position-relative">
      <button class="btn read-btn" type="button"><span class="aa">A<small>A</small></span>文字の読み取り</button>
      <button class="btn read-btn on" type="button">
        <svg width="52" height="40" viewBox="0 0 52 40"><rect x="2" y="2" width="48" height="36" rx="7" fill="none" stroke="#1abc9c" stroke-width="3"/><path d="M2 14h48M2 26h48M20 2v36" stroke="#1abc9c" stroke-width="3"/></svg>
        表の読み取り
      </button>
      <div class="lang">日本語＋英語
        <select class="form-select"><option>9</option></select>
      </div>
      <svg class="position-absolute" style="left:1656px;top:44px" width="50" height="52" viewBox="-25 -26 50 52"><g fill="#111"><rect x="-7" y="-26" width="14" height="52"/><rect x="-7" y="-26" width="14" height="52" transform="rotate(60)"/><rect x="-7" y="-26" width="14" height="52" transform="rotate(120)"/><circle r="18"/></g><circle r="8" fill="#cdd5df"/></svg>
      <span class="position-absolute fw-bold" style="left:1737px;top:26px;font:700 68px 'Liberation Sans',sans-serif;line-height:80px">?</span>
    </div>
    <div class="dlg-text d-flex">
      <div class="dlg-lines" id="ocrLines"></div>
      <div class="dlg-scroll"><div></div></div>
    </div>
    <div class="dlg-foot d-flex justify-content-end">
      <button class="btn foot-btn" style="width:218px" type="button">Excelで開く</button>
      <button class="btn foot-btn" style="width:144px" type="button">保存</button>
    </div>
  </div>

  <script>
    // rows of the scanned table: height, maker, mark, symbol, name, model
    const rows = [
      [68, '松下電工', 'v', 'KR', 'キープ継電器', 'HH52'],
      [70, '', 'v', '33Q|FLTS', '油面検出装置・油面フロートスイッチ', 'GYY'],
      [66, '', 'v', 'OLI', '油面計', ''],
      [69, '三菱電機', 'v', 'ESM^', '排煙濃度計', ''],
      [69, '〃', 'v', 'PM^', 'ポテンショメータ', 'QN4'],
      [67, '〃', 'x', 'SV', '電磁弁', ''],
      [66, '', 'x', 'MOV', '電動弁', ''],
      [69, '', 'x', 'MD^', '電動ダンパ', ''],
      [69, '', '', 'W^', '加湿装置', ''],
      [69, '福田電機', 'x', 'T^', 'サーモスタット', ''],
      [67, '', 'x', 'H^', 'ヒューミディスタット', ''],
      [67, '', 'v', 'T', '変圧器（計装機器用）', '200'],
      [66, '和泉電気', 'v', 'PAR', '台数制御器', 'WY7'],
      [67, '〃', 'v', 'RE－7', '変換器（パネル収納形）', '831'],
      [65, '〃', 'v', 'RE－4', '変換器（パネル収納形）', '831'],
      [68, '〃', 'v', 'RE－15', '変換器', '831'],
      [68, '和泉・キムデン', 'v', 'RE－8', '変換器', 'RY7'],
      [65, '', 'v', 'PIC', '圧力指示調節計', 'R30−2G・R30−5G'],
      [67, 'オムロン', 'v', 'RE－5', 'DC24V電源', 'RY7910D']
    ];

    function rowHtml(row) {
      const [h, maker, mark, sym, name, model] = row;
      const syms = sym.includes('|')
        ? `<td class="sy" style="font-size:44px;letter-spacing:.1em">${sym.split('|')[0]}</td><td class="sy" style="font-size:44px;letter-spacing:.12em">${sym.split('|')[1]}</td>`
        : `<td class="sy" colspan="2">${sym.replace('^', '<sup>△</sup>')}</td>`;
      const small = name.length > 14 ? ' sm' : '';
      const tail = model.startsWith('R30') || model.startsWith('RY79') ? '<span class="r">( 〃 )</span>' : '';
      const note = tail ? '〃' : '';
      return `<tr style="height:${h}px"><td class="mk">${maker}</td><td class="gap"></td>` +
        `<td class="v ${mark === 'x' ? 'x' : ''}">${mark === 'v' ? 'V' : ''}</td>${syms}` +
        `<td class="nm${small}" colspan="2">${name}</td><td class="md">${model}${tail}</td><td class="rm">${note}</td></tr>`;
    }

    // the first rows have merged cells so they are written out here
    const head = `
      <tr style="height:33px"><td class="mk"><div class="clip" style="justify-content:center">〃</div></td><td class="gap"></td><td class="v" rowspan="3"></td>
        <td colspan="2" rowspan="3" style="padding-top:26px"><div class="hd">補助継電器</div><div class="hd">（補助リレ）</div></td>
        <td rowspan="2" class="dash hd" style="letter-spacing:.3em;padding-bottom:30px">特殊</td>
        <td colspan="2" class="md dash" style="font-size:38px"><div class="clip">MY－4ND2（DC用ダイオード付）</div></td><td class="rm"></td></tr>
      <tr style="height:69px"><td class="mk"></td><td class="gap"></td>
        <td colspan="2" class="md dash" style="font-size:38px">LY－2N（加湿器等高容量用，動作表示付）</td><td class="rm"></td></tr>
      <tr style="height:69px"><td class="mk">富士・キムデン</td><td class="gap"></td><td class="hd">ソケット</td><td colspan="2" class="md" style="font-size:36px;letter-spacing:.1em">PYF14A（MY－4用）</td><td class="rm"></td></tr>`;
    const tail = `<tr class="tail" style="height:11px"><td class="mk"></td><td class="gap"></td><td class="v"></td><td class="sy" colspan="2"></td><td class="nm" colspan="2"></td><td class="md"></td><td class="rm"></td></tr>`;

    document.getElementById('scanRows').innerHTML = head + rows.map(rowHtml).join('') + tail;

    const lines = [
      'キープ耳訶', '坊面枝出技JMBフ〇ートスイッチ,,', '油,面廿,', '排,,', 'ボテンショ;,,メータ', ',匝弁,',
      '震動弁,,', '需動ダンバ,,', '加,湿装at,', 'サーモスタット,,', 'ヒューミディスタット,,', '変圧器(廿装從器用),,',
      '台牧初御器,,', '変檢器(バネル収粘形),,', '変快器(バネル収炉形),,', '変換器,,', '変換器,,'
    ];
    document.getElementById('ocrLines').innerHTML = lines.map(t => `<span>${t}</span>`).join('');

    // status bar cells: label, width, state
    const statusCells = [
      ['495.92, 179.82, 0', 225, ''], ['Standard', 127, ''], ['ISO-25', 97, ''], ['2D作図', 108, ''],
      ['スナップ', 108, 'dim k'], ['グリッド', 93, 'dim k'], ['直交', 74, 'on'], ['極トラック', 119, 'dim k'],
      ['図形スナップ', 150, 'on'], ['スナップトラック', 169, 'dim k'], ['線の太さ', 110, 'dim'], ['タイル', 80, 'k'],
      ['DUCS', 85, 'on'], ['ダイナミック', 131, 'on k'], ['クワッド', 90, 'dim k'], ['RT', 52, 'on'], ['HKA', 69, 'on'],
      ['LOCKUI', 111, 'dim'], ['無し', 66, '']
    ];
    document.getElementById('statusItems').innerHTML = statusCells
      .map(c => `<div class="sb ${c[2]}" style="width:${c[1]}px"><span>${c[0]}</span></div>`).join('');
  </script>

  <script src="https://cdn.jsdelivr.net/npm/bootstrap@5.3.0/dist/js/bootstrap.bundle.min.js"></script>
</body>

</html>
